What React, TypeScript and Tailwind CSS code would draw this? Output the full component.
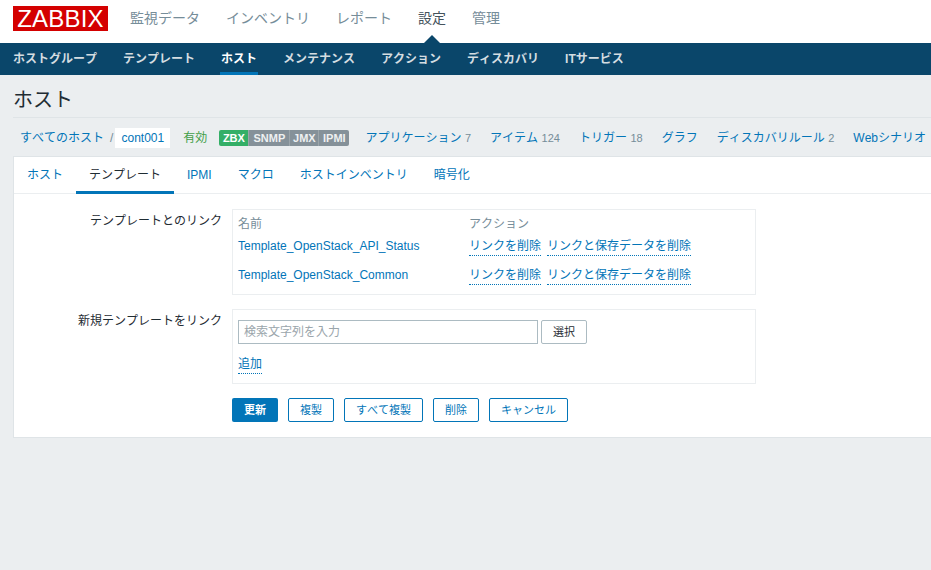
const FONT = '"Liberation Sans", "Noto Sans CJK JP", sans-serif';

const topMenu = ["監視データ", "インベントリ", "レポート", "設定", "管理"];
const subMenu = ["ホストグループ", "テンプレート", "ホスト", "メンテナンス", "アクション", "ディスカバリ", "ITサービス"];
const hostLinks: [string, string?][] = [
  ["アプリケーション", "7"],
  ["アイテム", "124"],
  ["トリガー", "18"],
  ["グラフ"],
  ["ディスカバリルール", "2"],
  ["Webシナリオ"],
];
const tabs = ["ホスト", "テンプレート", "IPMI", "マクロ", "ホストインベントリ", "暗号化"];
const linked = ["Template_OpenStack_API_Status", "Template_OpenStack_Common"];
const buttons = [
  { label: "複製", width: "w-[46px]" },
  { label: "すべて複製", width: "w-[79px]" },
  { label: "削除", width: "w-[46px]" },
  { label: "キャンセル", width: "w-[79px]" },
];

function DottedLink({ children }: { children: string }) {
  return (
    <a className="border-b border-dotted border-[#0275b8] pb-px leading-[16px] text-[#0275b8]">{children}</a>
  );
}

export default function App() {
  return (
    <div
      className="h-[570px] w-[931px] overflow-hidden bg-[#ebeef0] text-[12px] text-[#1f2c33] [font-kerning:none]"
      style={{ fontFamily: FONT }}
    >
      <header className="flex h-[43px] items-start bg-white">
        <div className="ml-[13px] mt-[6px] flex h-[25px] w-[95px] items-center justify-center bg-[#d40000] text-[24px] leading-none tracking-[0.2px] text-white">
          ZABBIX
        </div>
        <nav className="ml-[9px] flex">
          {topMenu.map((item) => (
            <div key={item} className="relative flex h-[43px] items-start px-[13px] pt-[9px]">
              <span className={`text-[14px] leading-[18px] ${item === "設定" ? "text-[#44535c]" : "text-[#768d99]"}`}>
                {item}
              </span>
              {item === "設定" && (
                <span className="absolute bottom-0 left-1/2 h-0 w-0 -translate-x-1/2 border-x-[8px] border-b-[8px] border-x-transparent border-b-[#0a466a]" />
              )}
            </div>
          ))}
        </nav>
      </header>

      <nav className="flex h-[32px] gap-[24px] bg-[#0a466a] pl-[12px]">
        {subMenu.map((item) => (
          <div
            key={item}
            className={`flex h-[32px] items-center border-b-[3px] px-px pt-[3px] text-[12px] font-bold ${
              item === "ホスト" ? "border-[#0275b8] text-white" : "border-transparent text-[#d5dde1]"
            }`}
          >
            {item}
          </div>
        ))}
      </nav>

      <div className="pl-[13px]">
        <h1 className="flex h-[43px] items-center border-b border-[#dfe4e7] pt-[8px] text-[20px] font-normal text-[#1f2c33]">
          ホスト
        </h1>

        <div className="flex h-[38px] items-center whitespace-nowrap pl-[7px] pt-[2px]">
          <a className="text-[#0275b8]">すべてのホスト</a>
          <span className="ml-[6px] text-[#768d99]">/</span>
          <span className="ml-[2px] flex h-[20px] w-[55px] items-center justify-center bg-white text-[#0275b8]">
            cont001
          </span>
          <span className="ml-[13px] text-[#429e47]">有効</span>
          <div className="ml-[12px] flex h-[16px] overflow-hidden rounded-[2px] text-[11px] font-bold leading-[16px] text-white">
            <span className="w-[29px] bg-[#34af67] text-center">ZBX</span>
            <span className="w-[41px] border-l border-[#9ca5aa] bg-[#859199] text-center text-[#eef0f1]">SNMP</span>
            <span className="w-[29px] border-l border-[#9ca5aa] bg-[#859199] text-center text-[#eef0f1]">JMX</span>
            <span className="w-[31px] border-l border-[#9ca5aa] bg-[#859199] text-center text-[#eef0f1]">IPMI</span>
          </div>
          <div className="ml-[16px] flex gap-[19px]">
            {hostLinks.map(([label, count]) => (
              <span key={label}>
                <a className="text-[#0275b8]">{label}</a>
                {count && <span className="ml-[3.5px] text-[11px] text-[#768d99]">{count}</span>}
              </span>
            ))}
          </div>
        </div>

        <section className="h-[282px] border-y border-l border-[#dfe4e7] bg-white">
          <div className="flex h-[37px] border-b border-[#ebeef0]">
            {tabs.map((tab) => (
              <a
                key={tab}
                className={`flex h-[37px] items-center border-b-[3px] px-[13px] pt-px ${
                  tab === "テンプレート" ? "border-[#0275b8] text-[#1f2c33]" : "border-transparent text-[#0275b8]"
                }`}
              >
                {tab}
              </a>
            ))}
          </div>

          <div className="pt-[15px]">
            <div className="flex">
              <div className="w-[208px] pt-[4px] text-right leading-[16px]">テンプレートとのリンク</div>
              <div className="ml-[10px] h-[86px] w-[524px] border border-[#ebeef0] px-[5px]">
                <div className="grid grid-cols-[231px_1fr] items-start">
                  <div className="pt-[6px] leading-[16px] text-[#768d99]">名前</div>
                  <div className="pt-[6px] leading-[16px] text-[#768d99]">アクション</div>
                </div>
                {linked.map((name, i) => (
                  <div key={name} className={`grid grid-cols-[231px_1fr] ${i === 0 ? "mt-[6px]" : "mt-[11px]"}`}>
                    <a className="leading-[16px] text-[#0275b8] [font-kerning:normal]">{name}</a>
                    <div className="flex gap-[6px]">
                      <DottedLink>リンクを削除</DottedLink>
                      <DottedLink>リンクと保存データを削除</DottedLink>
                    </div>
                  </div>
                ))}
              </div>
            </div>

            <div className="mt-[14px] flex">
              <div className="w-[208px] pt-[4px] text-right leading-[16px]">新規テンプレートをリンク</div>
              <div className="ml-[10px] h-[75px] w-[524px] border border-[#ebeef0] px-[5px] pt-[10px]">
                <div className="flex gap-[3px]">
                  <div className="flex h-[24px] w-[300px] items-center border border-[#acbbc2] px-[5px] text-[#9aa5ab]">
                    検索文字列を入力
                  </div>
                  <button className="h-[24px] w-[46px] rounded-[2px] border border-[#acbbc2] bg-white text-[11px] text-[#1f2c33]">
                    選択
                  </button>
                </div>
                <div className="mt-[12px] flex">
                  <DottedLink>追加</DottedLink>
                </div>
              </div>
            </div>

            <div className="ml-[218px] mt-[14px] flex gap-[10px] text-[11px]">
              <button className="h-[24px] w-[46px] rounded-[2px] bg-[#0275b8] font-bold text-white">更新</button>
              {buttons.map(({ label, width }) => (
                <button
                  key={label}
                  className={`h-[24px] rounded-[2px] border border-[#0275b8] bg-white text-[#0275b8] ${width}`}
                >
                  {label}
                </button>
              ))}
            </div>
          </div>
        </section>
      </div>
    </div>
  );
}
